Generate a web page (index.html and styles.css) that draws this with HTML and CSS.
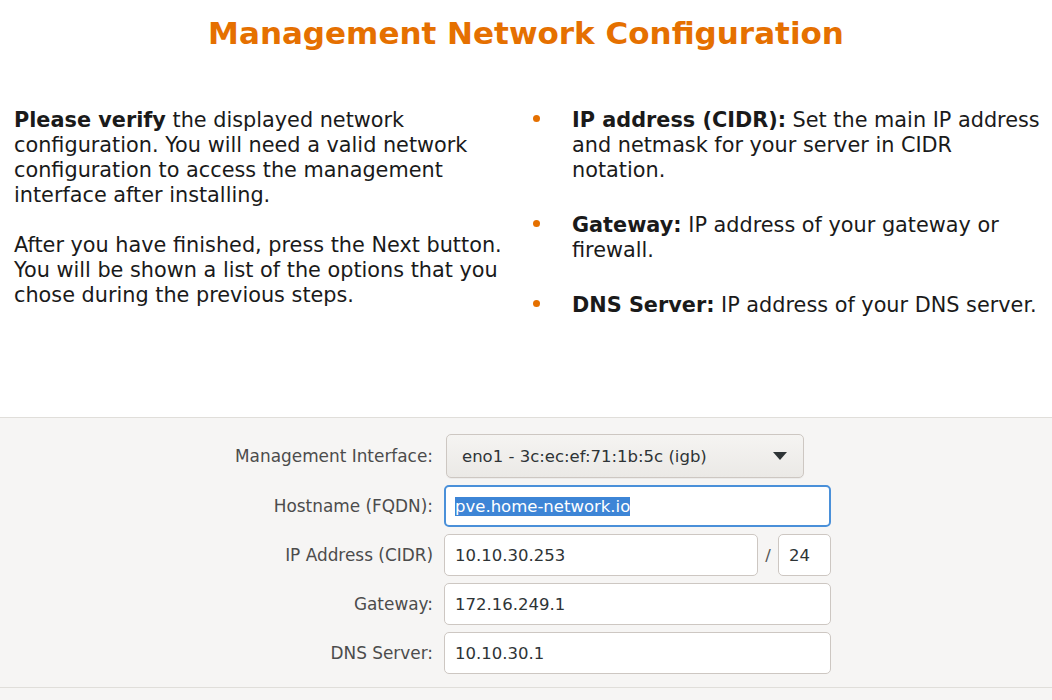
FILE: index.html
```html
<!DOCTYPE html>
<html>
<head>
<meta charset="utf-8">
<title>Management Network Configuration</title>
<link rel="stylesheet" href="styles.css">
</head>
<body>
<div class="top">
  <h1 class="title">Management Network Configuration</h1>
  <div class="cols">
    <div class="left">
      <p><b>Please verify</b> the displayed network configuration. You will need a valid network configuration to access the management interface after installing.</p>
      <p>After you have finished, press the Next button. You will be shown a list of the options that you chose during the previous steps.</p>
    </div>
    <ul class="right">
      <li><b>IP address (CIDR):</b> Set the main IP address and netmask for your server in CIDR notation.</li>
      <li><b>Gateway:</b> IP address of your gateway or firewall.</li>
      <li><b>DNS Server:</b> IP address of your DNS server.</li>
    </ul>
  </div>
</div>
<div class="form-area">
  <div class="form">
    <label class="lbl">Management Interface:</label>
    <div class="field"><div class="select"><span>eno1 - 3c:ec:ef:71:1b:5c (igb)</span><span class="arrow"></span></div></div>
    <label class="lbl">Hostname (FQDN):</label>
    <div class="field"><div class="input focus"><span class="sel">pve.home-network.io</span></div></div>
    <label class="lbl">IP Address (CIDR)</label>
    <div class="field ip"><div class="input grow">10.10.30.253</div><span class="slash">/</span><div class="input mask">24</div></div>
    <label class="lbl">Gateway:</label>
    <div class="field"><div class="input">172.16.249.1</div></div>
    <label class="lbl">DNS Server:</label>
    <div class="field"><div class="input">10.10.30.1</div></div>
  </div>
</div>
<div class="footer"></div>
</body>
</html>
```
FILE: styles.css
```css
html, body {
  margin: 0;
  padding: 0;
  background: #ffffff;
  font-family: "DejaVu Sans", "Noto Sans", sans-serif;
  color: #000;
}
.top {
  height: 417px;
  box-sizing: border-box;
  padding-top: 15px;
}
.title {
  margin: 0;
  text-align: center;
  font-size: 31px;
  font-weight: bold;
  color: #e57000;
  line-height: 36px;
}
.cols {
  display: flex;
  margin-top: 57px;
  font-size: 20.8px;
  line-height: 25px;
  color: #1a1a1a;
}
.left {
  width: 526px;
  padding: 0 12px 0 14px;
  box-sizing: border-box;
}
.left p {
  margin: 0 0 25px 0;
}
.right {
  flex: 1;
  margin: 0;
  padding: 0 3px 0 7px;
  list-style: none;
}
.right li {
  position: relative;
  padding-left: 39px;
  margin-bottom: 30px;
}
.right li::before {
  content: "";
  position: absolute;
  left: 0;
  top: 7px;
  width: 7px;
  height: 7px;
  border-radius: 50%;
  background: #e57000;
}
.form-area {
  background: #f6f5f4;
  border-top: 1px solid #e0deda;
  border-bottom: 1px solid #e0deda;
  padding: 16px 0 13px 0;
}
.form {
  display: grid;
  grid-template-columns: 433px 387px;
  column-gap: 11px;
  row-gap: 7px;
  font-size: 16.5px;
}
.lbl {
  text-align: right;
  color: #4c4c4c;
  align-self: center;
  font-size: 16.9px;
}
.field {
  display: flex;
  align-items: center;
}
.select {
  margin-left: 2px;
  width: 358px;
  height: 44px;
  box-sizing: border-box;
  border: 1px solid #cdc7c2;
  border-radius: 5px;
  background: linear-gradient(#f5f4f2, #ebe9e6);
  display: flex;
  align-items: center;
  justify-content: space-between;
  padding: 0 16px 0 15px;
  color: #2e3436;
  box-shadow: 0 1px 0 rgba(0,0,0,0.04);
}
.arrow {
  width: 0;
  height: 0;
  border-left: 7px solid transparent;
  border-right: 7px solid transparent;
  border-top: 8px solid #2e3436;
}
.input {
  width: 100%;
  height: 42px;
  box-sizing: border-box;
  border: 1px solid #cdc7c2;
  border-radius: 5px;
  background: #ffffff;
  display: flex;
  align-items: center;
  padding: 0 10px;
  color: #2e3436;
}
.input.focus {
  border: 2px solid #4a90d9;
  padding-left: 9px;
}
.sel {
  background: #3d85d6;
  color: #ffffff;
}
.ip .grow {
  flex: 1;
  width: auto;
}
.slash {
  width: 20px;
  text-align: center;
  color: #555;
}
.mask {
  width: 53px;
  flex: none;
}
.footer {
  height: 12px;
  background: #f6f5f4;
}
```
